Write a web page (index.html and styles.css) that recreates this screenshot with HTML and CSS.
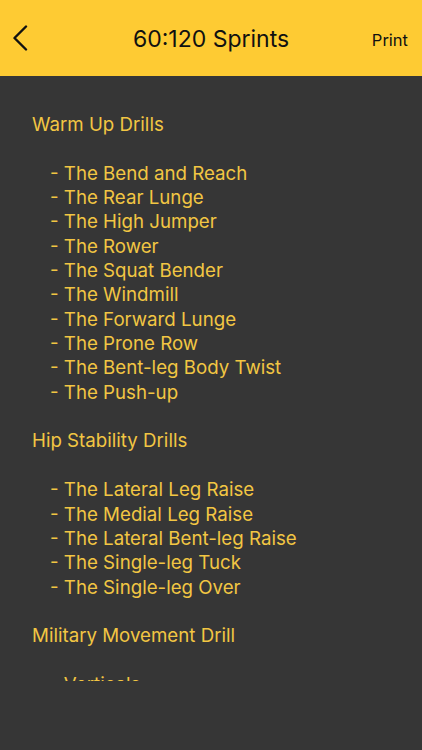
FILE: index.html
```html
<!DOCTYPE html>
<html lang="en">
<head>
  <meta charset="UTF-8">
  <meta name="viewport" content="width=device-width, initial-scale=1.0">
  <title>60:120 Sprints</title>
  <link rel="stylesheet" href="styles.css">
</head>
<body>
  <header class="navbar">
    <a class="back" href="#">
      <svg width="16" height="26" viewBox="0 0 16 26"><path d="M14 1.5 L2.5 13 L14 24.5" fill="none" stroke="#111" stroke-width="2.4" stroke-linecap="round" stroke-linejoin="round"/></svg>
    </a>
    <h1 class="title">60:120 Sprints</h1>
    <a class="print" href="#">Print</a>
  </header>
  <main class="content">
    <div class="text">
      <p class="heading">Warm Up Drills</p>
      <p class="blank">&nbsp;</p>
      <p class="item">- The Bend and Reach</p>
      <p class="item">- The Rear Lunge</p>
      <p class="item">- The High Jumper</p>
      <p class="item">- The Rower</p>
      <p class="item">- The Squat Bender</p>
      <p class="item">- The Windmill</p>
      <p class="item">- The Forward Lunge</p>
      <p class="item">- The Prone Row</p>
      <p class="item">- The Bent-leg Body Twist</p>
      <p class="item">- The Push-up</p>
      <p class="blank">&nbsp;</p>
      <p class="heading">Hip Stability Drills</p>
      <p class="blank">&nbsp;</p>
      <p class="item">- The Lateral Leg Raise</p>
      <p class="item">- The Medial Leg Raise</p>
      <p class="item">- The Lateral Bent-leg Raise</p>
      <p class="item">- The Single-leg Tuck</p>
      <p class="item">- The Single-leg Over</p>
      <p class="blank">&nbsp;</p>
      <p class="heading">Military Movement Drill</p>
      <p class="blank">&nbsp;</p>
      <p class="item">- Verticals</p>
    </div>
  </main>
</body>
</html>
```

FILE: styles.css
```css
body {
  margin: 0;
  padding: 0;
  background-color: #363636;
  font-family: Inter, "Liberation Sans", sans-serif;
  height: 750px;
  overflow: hidden;
}
.navbar {
  height: 76px;
  background-color: #fecb33;
  display: flex;
  align-items: center;
  justify-content: space-between;
  padding: 2px 14px 0 12px;
  box-sizing: border-box;
  position: relative;
}
.back {
  display: flex;
  padding-bottom: 2px;
}
.title {
  position: absolute;
  left: 0;
  right: 0;
  top: 25px;
  margin: 0;
  text-align: center;
  font-size: 23px;
  line-height: 28px;
  font-weight: 400;
  color: #111;
  pointer-events: none;
}
.print {
  color: #111;
  text-decoration: none;
  font-size: 16.5px;
  padding-top: 2px;
}
.content {
  height: 605px;
  overflow: hidden;
  padding: 37px 0 0 32px;
  box-sizing: border-box;
}
.text p {
  margin: 0;
  color: #f2c643;
  font-size: 18.7px;
  line-height: 24.35px;
}
.text .item {
  padding-left: 18px;
}
```
